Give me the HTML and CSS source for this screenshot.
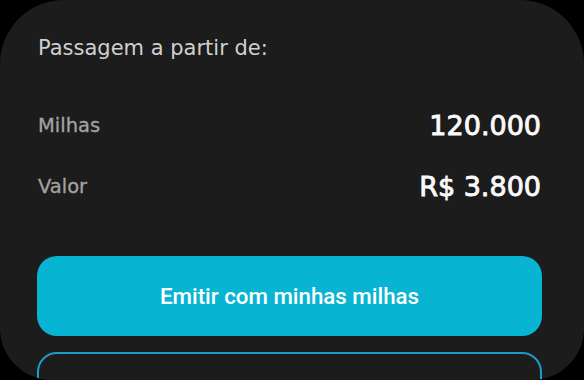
FILE: index.html
```html
<!DOCTYPE html>
<html lang="pt-BR">
<head>
<meta charset="utf-8">
<link rel="stylesheet" href="styles.css">
</head>
<body>
<div class="card">
  <p class="title">Passagem a partir de:</p>
  <div class="rows">
    <div class="row"><span class="label">Milhas</span><span class="value">120.000</span></div>
    <div class="row"><span class="label">Valor</span><span class="value">R$ 3.800</span></div>
  </div>
  <button class="btn primary">Emitir com minhas milhas</button>
  <button class="btn outline"></button>
</div>
</body>
</html>
```
FILE: styles.css
```css
html, body { margin: 0; padding: 0; background: #000; height: 380px; overflow: hidden; }
body { width: 584px; font-family: "DejaVu Sans", "Noto Sans", sans-serif; }
.card {
  box-sizing: border-box;
  width: 584px;
  height: 380px;
  background: #1c1c1c;
  border-radius: 64px 64px 52px 52px;
  padding: 34px 42px 0 37px;
  display: flex;
  flex-direction: column;
  overflow: hidden;
}
.title {
  margin: 0 0 0 1px;
  font-size: 21px;
  line-height: 28px;
  color: #d0d0d0;
}
.rows {
  margin-top: 46px;
  display: flex;
  flex-direction: column;
  gap: 27px;
}
.row {
  display: flex;
  justify-content: space-between;
  align-items: center;
  height: 34px;
}
.label {
  font-size: 19.5px;
  color: #a3a3a3;
  margin-left: 1px;
  -webkit-text-stroke: 0.3px #a3a3a3;
}
.value {
  font-size: 27px;
  color: #fafafa;
  -webkit-text-stroke: 0.9px #fafafa;
  margin-right: 1px;
}
.btn {
  display: block;
  flex-shrink: 0;
  width: 505px;
  border-radius: 20px;
  font-family: "Roboto", "Noto Sans", sans-serif;
  padding: 0;
}
.primary {
  margin-top: 53px;
  height: 80px;
  background: #07b5d3;
  border: none;
  color: #fff;
  font-size: 22.3px;
  font-weight: 500;
}
.outline {
  margin-top: 16px;
  height: 80px;
  background: #1c1c1c;
  border: 2px solid #1a9ccc;
}
```
